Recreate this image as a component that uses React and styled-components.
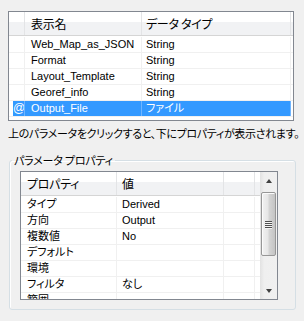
import React from 'react';
import styled, { createGlobalStyle } from 'styled-components';

const GlobalStyle = createGlobalStyle`
  body {
    margin: 0;
    background: #f0f0f0;
    font-family: "Noto Sans CJK JP", "Liberation Sans", sans-serif;
    font-size: 12px;
    color: #000;
  }
`;

const Page = styled.div`
  width: 304px;
  height: 321px;
  box-sizing: border-box;
  padding: 11px 10px 0 8px;
  display: flex;
  flex-direction: column;
  overflow: hidden;
`;

/* ---------- parameter list ---------- */

const ListBox = styled.div`
  height: 110px;
  box-sizing: border-box;
  border: 1px solid #828790;
  background: #fff;
  overflow: hidden;
`;

const HeaderRow = styled.div`
  display: flex;
  height: 24px;
  margin-bottom: 1px;
  box-sizing: border-box;
  border-bottom: 1px solid #d5d5d5;
  background: linear-gradient(#ffffff 0, #ffffff 42%, #f1f2f4 43%, #f1f2f4 100%);
`;

const HeadCell = styled.div`
  flex: none;
  width: ${p => p.$w}px;
  box-sizing: border-box;
  padding-left: ${p => p.$pad || 0}px;
  border-right: 1px solid #e3e4e6;
  line-height: 23px;
  white-space: nowrap;
  font-feature-settings: "palt";
  letter-spacing: -0.3px;
`;

const Row = styled.div`
  display: flex;
  height: 16px;
  box-sizing: border-box;
  border-bottom: 1px solid #f0f0f0;
  color: ${p => (p.$selected ? '#fff' : '#000')};
`;

const Cell = styled.div`
  flex: none;
  width: ${p => p.$w}px;
  box-sizing: border-box;
  padding-left: ${p => p.$pad || 0}px;
  border-right: 1px solid ${p => (p.$selected ? '#6fb5ff' : '#f0f0f0')};
  background: ${p => (p.$selected ? '#3399ff' : 'transparent')};
  font-family: "Liberation Sans", "Noto Sans CJK JP", sans-serif;
  font-size: 11px;
  line-height: 15px;
  white-space: nowrap;
  overflow: hidden;
  font-feature-settings: "palt";
`;

const MarkCell = styled(Cell)`
  padding-left: 4px;
  background-clip: content-box;
  text-align: center;
  font-size: 12px;
`;

/* ---------- hint ---------- */

const Hint = styled.div`
  margin-top: 5px;
  font-size: 11px;
  line-height: 15px;
  white-space: nowrap;
  font-feature-settings: "palt";
  letter-spacing: -0.35px;
`;

/* ---------- group box ---------- */

const Group = styled.fieldset`
  margin: 12px -2px 0 1px;
  padding: 3px 17px 9px 10px;
  border: 1px solid #d5dfe5;
  border-radius: 3px;
  box-shadow: inset 1px 1px 0 #fff;
  min-width: 0;
`;

const Legend = styled.legend`
  margin-left: -8px;
  padding: 0 2px;
  font-size: 11px;
  line-height: 15px;
  font-feature-settings: "palt";
  letter-spacing: -0.2px;
`;

const PropBox = styled.div`
  height: 129px;
  box-sizing: border-box;
  border: 1px solid #828790;
  background: #fff;
  display: flex;
  overflow: hidden;
`;

const PropBody = styled.div`
  flex: 1;
  min-width: 0;
  display: flex;
  flex-direction: column;
`;

/* ---------- scrollbar ---------- */

const ScrollBar = styled.div`
  flex: none;
  width: 17px;
  display: flex;
  flex-direction: column;
  background: linear-gradient(to right, #e2e2e2 0, #efefef 25%, #f0f0f0 100%);
`;

const Arrow = styled.div`
  height: 17px;
  display: flex;
  align-items: center;
  justify-content: center;
  &::before {
    content: '';
    border-left: 3.5px solid transparent;
    border-right: 3.5px solid transparent;
    ${p => (p.$down ? 'border-top: 4px solid #404040;' : 'border-bottom: 4px solid #404040;')}
  }
`;

const Track = styled.div`
  flex: 1;
  padding-top: 3px;
`;

const Thumb = styled.div`
  margin: 0 1px;
  height: 64px;
  box-sizing: border-box;
  border: 1px solid #979797;
  border-radius: 2px;
  background: linear-gradient(to right, #f2f2f2 0, #e6e6e6 45%, #d4d4d4 55%, #c4c4c4 100%);
  box-shadow: inset 1px 1px 0 #fbfbfb;
  display: flex;
  flex-direction: column;
  align-items: center;
  justify-content: center;
  gap: 1px;
`;

const Grip = styled.span`
  width: 7px;
  height: 1px;
  background: #505050;
  box-shadow: 0 1px 0 #f4f4f4;
`;

const params = [
  ['', 'Web_Map_as_JSON', 'String'],
  ['', 'Format', 'String'],
  ['', 'Layout_Template', 'String'],
  ['', 'Georef_info', 'String'],
  ['@', 'Output_File', 'ファイル', true],
];

const props = [
  ['タイプ', 'Derived'],
  ['方向', 'Output'],
  ['複数値', 'No'],
  ['デフォルト', ''],
  ['環境', ''],
  ['フィルタ', 'なし'],
  ['範囲', ''],
];

export default function App() {
  return (
    <>
      <GlobalStyle />
      <Page>
        <ListBox>
          <HeaderRow>
            <HeadCell $w={16} />
            <HeadCell $w={117} $pad={6}>表示名</HeadCell>
            <HeadCell $w={149} $pad={4}>データ タイプ</HeadCell>
          </HeaderRow>
          {params.map(([mark, name, type, sel]) => (
            <Row key={name} $selected={sel}>
              <MarkCell $w={16} $selected={sel}>{mark}</MarkCell>
              <Cell $w={117} $pad={6} $selected={sel}>{name}</Cell>
              <Cell $w={149} $pad={4} $selected={sel}>{type}</Cell>
            </Row>
          ))}
        </ListBox>

        <Hint>上のパラメータをクリックすると、下にプロパティが表示されます。</Hint>

        <Group>
          <Legend>パラメータ プロパティ</Legend>
          <PropBox>
            <PropBody>
              <HeaderRow>
                <HeadCell $w={96} $pad={6}>プロパティ</HeadCell>
                <HeadCell $w={107} $pad={5}>値</HeadCell>
                <HeadCell $w={31} />
              </HeaderRow>
              {props.map(([k, v]) => (
                <Row key={k}>
                  <Cell $w={96} $pad={6}>{k}</Cell>
                  <Cell $w={107} $pad={5}>{v}</Cell>
                  <Cell $w={31} />
                </Row>
              ))}
            </PropBody>
            <ScrollBar>
              <Arrow />
              <Track>
                <Thumb>
                  <Grip />
                  <Grip />
                  <Grip />
                  <Grip />
                </Thumb>
              </Track>
              <Arrow $down />
            </ScrollBar>
          </PropBox>
        </Group>
      </Page>
    </>
  );
}
